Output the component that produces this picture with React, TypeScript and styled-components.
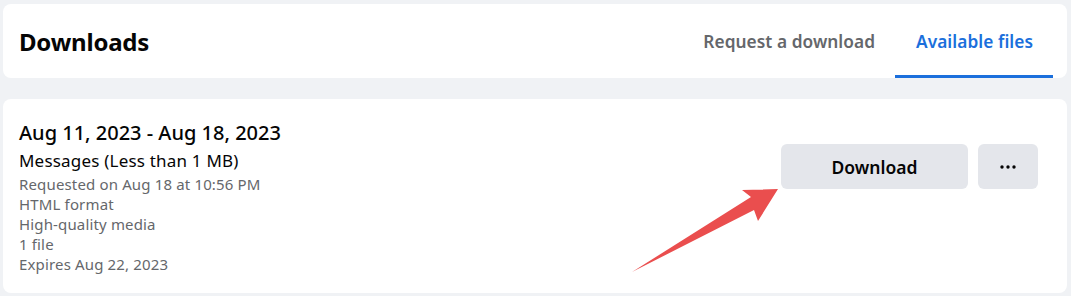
import React from 'react';
import styled, { createGlobalStyle } from 'styled-components';

const GlobalStyle = createGlobalStyle`
  html, body {
    margin: 0;
    padding: 0;
    background: #f0f2f5;
    font-family: "Noto Sans", "Open Sans", Arial, sans-serif;
    color: #050505;
  }
`

const Page = styled.div`
  padding: 4px 4px 0 3px;
  display: flex;
  flex-direction: column;
  gap: 21px;
  position: relative;
`

const HeaderCard = styled.div`
  height: 74px;
  background: #fff;
  border-radius: 8px;
  display: flex;
  align-items: stretch;
  justify-content: space-between;
  padding: 0 14px 0 16px;
`

const Title = styled.h1`
  margin: 0;
  align-self: center;
  font-size: 24px;
  font-weight: 700;
  letter-spacing: -0.2px;
  color: #050505;
`

const Tabs = styled.div`
  display: flex;
  align-items: stretch;
`

const Tab = styled.div<{ $active?: boolean }>`
  display: flex;
  align-items: center;
  padding: 3px 20px 0 21px;
  font-size: 17.3px;
  font-weight: 600;
  letter-spacing: 0.05px;
  color: ${p => (p.$active ? '#1b6fdc' : '#65676b')};
  border-bottom: 3px solid ${p => (p.$active ? '#1b6fdc' : 'transparent')};
`

const FileCard = styled.div`
  height: 194px;
  box-sizing: border-box;
  background: #fff;
  border-radius: 8px;
  display: flex;
  justify-content: space-between;
  padding: 20px 29px 0 16px;
`

const Info = styled.div`
  display: flex;
  flex-direction: column;
`

const Range = styled.div`
  font-size: 20px;
  font-weight: 500;
  line-height: 28px;
`

const Kind = styled.div`
  font-size: 17px;
  line-height: 24px;
  letter-spacing: 0.2px;
  margin: 2px 0 1px;
`

const Detail = styled.div`
  font-size: 15px;
  line-height: 20px;
  color: #65676b;
  letter-spacing: 0.15px;
`

const Actions = styled.div`
  display: flex;
  gap: 10px;
  margin-top: 25px;
`

const Button = styled.button<{ $width: number }>`
  width: ${p => p.$width}px;
  height: 45px;
  border: none;
  border-radius: 6px;
  background: #e4e6eb;
  font-family: inherit;
  font-size: 17.5px;
  font-weight: 600;
  color: #050505;
  display: flex;
  align-items: center;
  justify-content: center;
  padding: 0;
`

const Arrow = styled.svg`
  position: absolute;
  left: 0;
  top: 0;
  pointer-events: none;
`

function App() {
  return (
    <>
      <GlobalStyle />
      <Page>
        <HeaderCard>
          <Title>Downloads</Title>
          <Tabs>
            <Tab>Request a download</Tab>
            <Tab $active>Available files</Tab>
          </Tabs>
        </HeaderCard>
        <FileCard>
          <Info>
            <Range>Aug 11, 2023 - Aug 18, 2023</Range>
            <Kind>Messages (Less than 1 MB)</Kind>
            <Detail>Requested on Aug 18 at 10:56 PM</Detail>
            <Detail>HTML format</Detail>
            <Detail>High-quality media</Detail>
            <Detail>1 file</Detail>
            <Detail>Expires Aug 22, 2023</Detail>
          </Info>
          <Actions>
            <Button $width={187}>Download</Button>
            <Button $width={60}>
              <svg width="16" height="4" viewBox="0 0 16 4">
                <circle cx="2" cy="2" r="1.7" fill="#050505" />
                <circle cx="8" cy="2" r="1.7" fill="#050505" />
                <circle cx="14" cy="2" r="1.7" fill="#050505" />
              </svg>
            </Button>
          </Actions>
        </FileCard>
        <Arrow width="1071" height="296" viewBox="0 0 1071 296">
          <polygon
            points="778,189 742,190 751,197 632,272 754,210 758,221"
            fill="#ea4e4e"
          />
        </Arrow>
      </Page>
    </>
  );
}

export default App;
